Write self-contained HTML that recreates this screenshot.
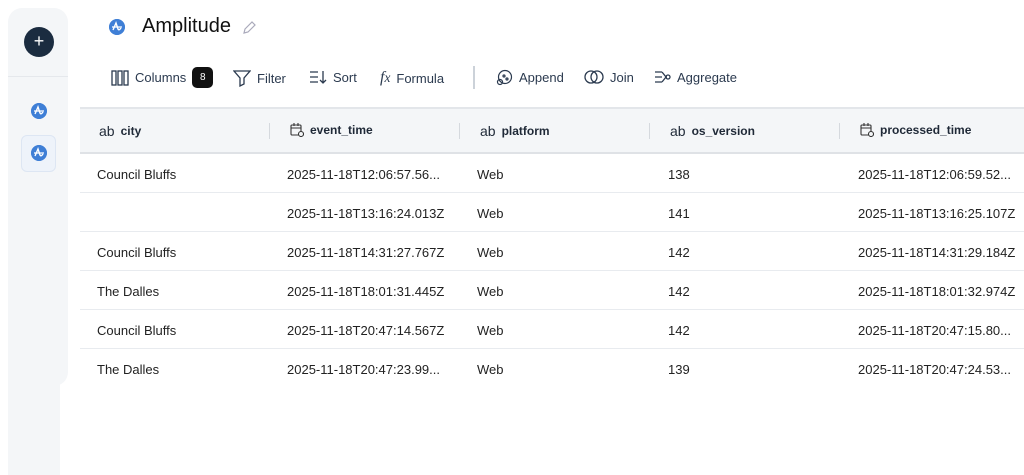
<!DOCTYPE html>
<html><head><meta charset="utf-8"><style>
*{box-sizing:border-box;margin:0;padding:0}
body{width:1024px;height:475px;overflow:hidden;background:#fff;font-family:"Liberation Sans",sans-serif;color:#1f2937;position:relative}
.side{position:absolute;left:8px;top:8px;width:60px;height:378px;background:#f4f6f8;border-radius:14px}
.side2{position:absolute;left:8px;top:370px;width:52px;height:105px;background:#f4f6f8}
.plus{position:absolute;left:24px;top:27px;width:30px;height:30px;border-radius:50%;background:#1b2c40;color:#fff;text-align:center;line-height:29px;font-size:18px}
.sep{position:absolute;left:8px;top:76px;width:60px;height:1px;background:#e5e8ec}
.logo{position:absolute;width:16px;height:16px;border-radius:50%;background:#3f7fd6}
.sel{position:absolute;left:21px;top:135px;width:35px;height:37px;border:1px solid #dde6f3;border-radius:6px;background:#eef3fa}
.title{position:absolute;left:142px;top:15px;font-size:20px;color:#111}
.tb{position:absolute;top:69px;font-size:13px;color:#2b3a4f;display:flex;align-items:center;gap:6px}
.badge{background:#111;color:#fff;font-size:10px;border-radius:5px;width:21px;height:21px;display:inline-flex;align-items:center;justify-content:center}
.vbar{position:absolute;left:473px;top:66px;width:2px;height:23px;background:#ccd2d9}
.thead{position:absolute;left:80px;top:107px;width:944px;height:47px;background:#f4f6f8;border-top:2px solid #e3e6ea;border-bottom:2px solid #dfe2e6}
.th{position:absolute;top:14px;font-size:12px;font-weight:bold;color:#1f2937;display:flex;align-items:center;gap:6px}
.th .ab{font-weight:normal;font-size:14px}
.cs{position:absolute;top:14px;width:1px;height:16px;background:#d5d9de}
.row{position:absolute;left:80px;width:944px;height:39px;border-bottom:1px solid #e8ebef;font-size:13px;color:#222}
.row span{position:absolute;top:13px}
</style></head><body>
<div class="side"></div><div class="side2"></div>
<div class="plus">+</div>
<div class="sep"></div>
<div class="sel"></div>
<svg class="logo" style="left:31px;top:103px" viewBox="0 0 16 16"><circle cx="8" cy="8" r="8" fill="#3f7fd6"/><path d="M4 11 L7 4 L9 10 Q10 12 12 9" stroke="#fff" stroke-width="1.4" fill="none"/><path d="M3 8h10" stroke="#fff" stroke-width="1.2"/></svg>
<svg class="logo" style="left:31px;top:145px" viewBox="0 0 16 16"><circle cx="8" cy="8" r="8" fill="#3f7fd6"/><path d="M4 11 L7 4 L9 10 Q10 12 12 9" stroke="#fff" stroke-width="1.4" fill="none"/><path d="M3 8h10" stroke="#fff" stroke-width="1.2"/></svg>
<svg class="logo" style="left:109px;top:19px" viewBox="0 0 16 16"><circle cx="8" cy="8" r="8" fill="#3f7fd6"/><path d="M4 11 L7 4 L9 10 Q10 12 12 9" stroke="#fff" stroke-width="1.4" fill="none"/><path d="M3 8h10" stroke="#fff" stroke-width="1.2"/></svg>
<div class="title">Amplitude</div>
<svg style="position:absolute;left:241px;top:20px" width="16" height="16" viewBox="0 0 16 16"><path d="M3 13l1-4 7-7 3 3-7 7z" stroke="#aab" fill="none" stroke-width="1.2"/></svg>
<div class="tb" style="left:111px;top:67px"><svg width="18" height="18" viewBox="0 0 18 18" fill="none" stroke="#2b3a4f" stroke-width="1.3"><rect x="1" y="2" width="4" height="14"/><rect x="7" y="2" width="4" height="14"/><rect x="13" y="2" width="4" height="14"/></svg>Columns<span class="badge">8</span></div>
<div class="tb" style="left:233px"><svg width="18" height="18" viewBox="0 0 18 18" fill="none" stroke="#2b3a4f" stroke-width="1.3"><path d="M1 2h16l-6 7v6l-4 2v-8z"/></svg>Filter</div>
<div class="tb" style="left:309px"><svg width="18" height="16" viewBox="0 0 18 16" fill="none" stroke="#2b3a4f" stroke-width="1.3"><path d="M1 3h8M1 8h8M1 13h8M14 2v12M11 11l3 3 3-3"/></svg>Sort</div>
<div class="tb" style="left:380px"><span style="font-style:italic;font-family:'Liberation Serif',serif;font-size:16px">f<small>x</small></span>Formula</div>
<div class="vbar"></div>
<div class="tb" style="left:496px"><svg width="17" height="17" viewBox="0 0 17 17" fill="none" stroke="#2b3a4f" stroke-width="1.2"><circle cx="9" cy="8" r="6.5"/><circle cx="4" cy="13" r="2.5"/><circle cx="8" cy="7" r="1"/><circle cx="11" cy="10" r="1"/></svg>Append</div>
<div class="tb" style="left:584px"><svg width="20" height="16" viewBox="0 0 20 16" fill="none" stroke="#2b3a4f" stroke-width="1.3"><circle cx="7" cy="8" r="6"/><circle cx="13" cy="8" r="6"/></svg>Join</div>
<div class="tb" style="left:654px"><svg width="17" height="16" viewBox="0 0 17 16" fill="none" stroke="#2b3a4f" stroke-width="1.3"><path d="M1 3h7M1 8h7M1 13h7M8 3l4 5-4 5M12 8h1"/><circle cx="14" cy="8" r="2"/></svg>Aggregate</div>
<div class="thead">
<div class="th" style="left:19px"><span class="ab">ab</span>city</div><div class="cs" style="left:189px"></div>
<div class="th" style="left:210px"><svg width="14" height="14" viewBox="0 0 14 14" fill="none" stroke="#333" stroke-width="1.1"><rect x="1" y="2" width="10" height="10" rx="1"/><path d="M1 5h10M4 0v3M8 0v3"/><circle cx="11" cy="11" r="2.5" fill="#f4f6f8"/></svg>event_time</div><div class="cs" style="left:379px"></div>
<div class="th" style="left:400px"><span class="ab">ab</span>platform</div><div class="cs" style="left:569px"></div>
<div class="th" style="left:590px"><span class="ab">ab</span>os_version</div><div class="cs" style="left:759px"></div>
<div class="th" style="left:780px"><svg width="14" height="14" viewBox="0 0 14 14" fill="none" stroke="#333" stroke-width="1.1"><rect x="1" y="2" width="10" height="10" rx="1"/><path d="M1 5h10M4 0v3M8 0v3"/><circle cx="11" cy="11" r="2.5" fill="#f4f6f8"/></svg>processed_time</div>
</div>
<div class="row" style="top:154px"><span style="left:17px">Council Bluffs</span><span style="left:207px">2025-11-18T12:06:57.56...</span><span style="left:397px">Web</span><span style="left:588px">138</span><span style="left:778px">2025-11-18T12:06:59.52...</span></div>
<div class="row" style="top:193px"><span style="left:207px">2025-11-18T13:16:24.013Z</span><span style="left:397px">Web</span><span style="left:588px">141</span><span style="left:778px">2025-11-18T13:16:25.107Z</span></div>
<div class="row" style="top:232px"><span style="left:17px">Council Bluffs</span><span style="left:207px">2025-11-18T14:31:27.767Z</span><span style="left:397px">Web</span><span style="left:588px">142</span><span style="left:778px">2025-11-18T14:31:29.184Z</span></div>
<div class="row" style="top:271px"><span style="left:17px">The Dalles</span><span style="left:207px">2025-11-18T18:01:31.445Z</span><span style="left:397px">Web</span><span style="left:588px">142</span><span style="left:778px">2025-11-18T18:01:32.974Z</span></div>
<div class="row" style="top:310px"><span style="left:17px">Council Bluffs</span><span style="left:207px">2025-11-18T20:47:14.567Z</span><span style="left:397px">Web</span><span style="left:588px">142</span><span style="left:778px">2025-11-18T20:47:15.80...</span></div>
<div class="row" style="top:349px;border-bottom:none"><span style="left:17px">The Dalles</span><span style="left:207px">2025-11-18T20:47:23.99...</span><span style="left:397px">Web</span><span style="left:588px">139</span><span style="left:778px">2025-11-18T20:47:24.53...</span></div>
</body></html>
